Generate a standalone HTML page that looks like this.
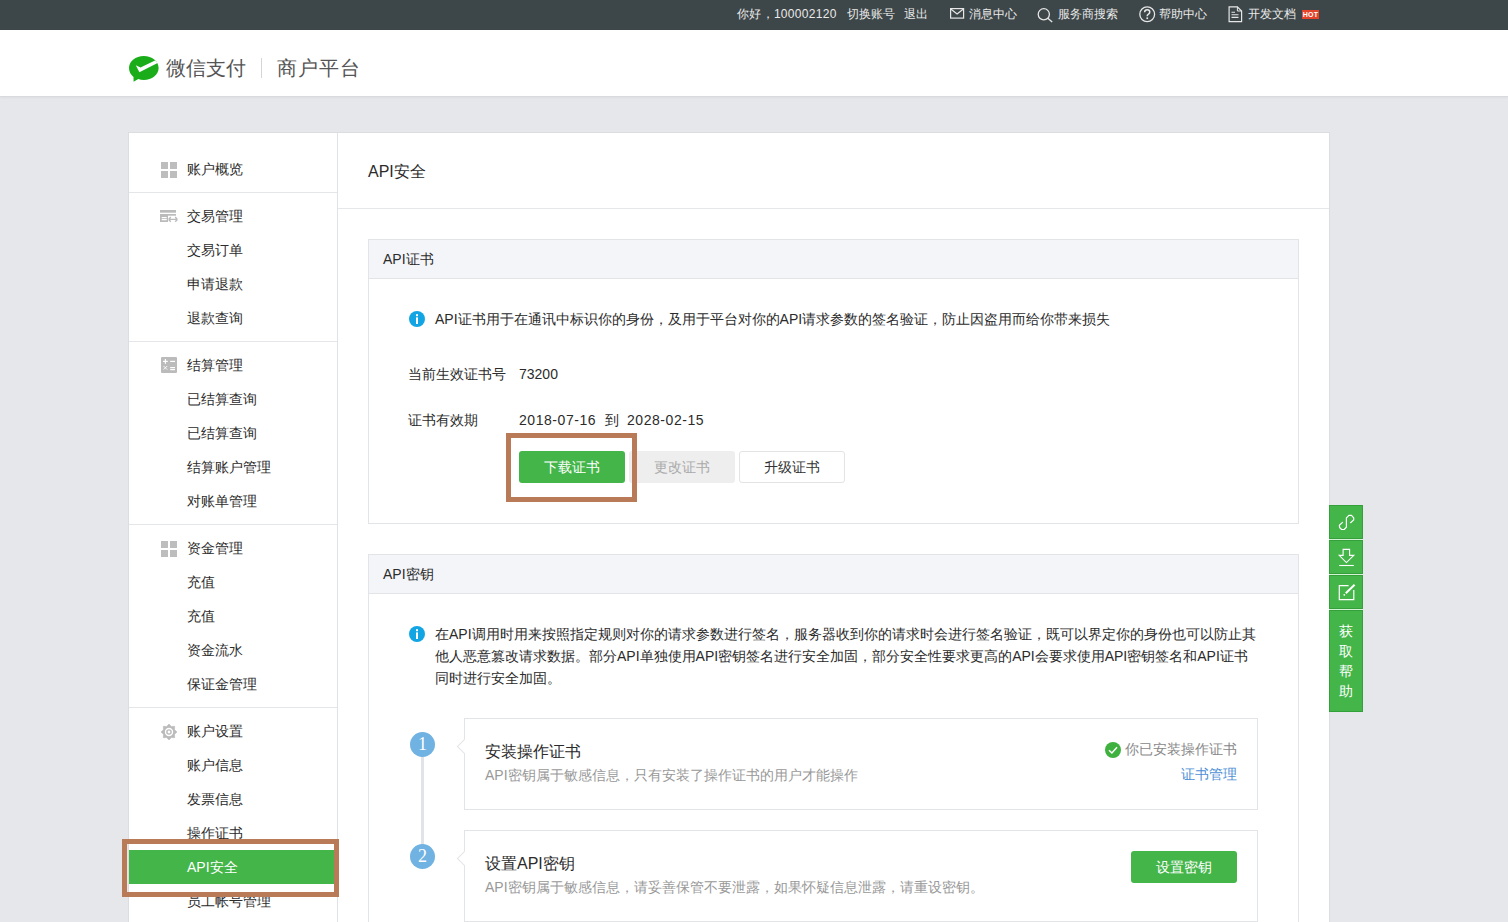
<!DOCTYPE html>
<html><head><meta charset="utf-8">
<style>
*{margin:0;padding:0;box-sizing:border-box;}
html,body{width:1508px;height:922px;overflow:hidden;}
body{background:#e6e7eb;font-family:"Liberation Sans",sans-serif;font-size:14px;color:#2b2b2b;position:relative;}
.abs{position:absolute;}
svg{position:absolute;overflow:visible;}
#topbar{left:0;top:0;width:1508px;height:30px;background:#3d4648;color:#eaeaea;font-size:12px;}
#topbar span{position:absolute;top:6px;line-height:16px;white-space:nowrap;}
#header{left:0;top:30px;width:1508px;height:67px;background:#fff;border-bottom:1px solid #d9dadd;box-shadow:0 1px 2px rgba(0,0,0,0.04);}
#main{left:128px;top:132px;width:1202px;height:800px;background:#fff;border:1px solid #dcdde1;}
#side{left:129px;top:133px;width:209px;height:800px;border-right:1px solid #e1e2e6;}
.nav{position:absolute;left:187px;white-space:nowrap;line-height:18px;}
.hr{position:absolute;left:129px;width:208px;height:1px;background:#e5e6e9;}
.panel{position:absolute;left:368px;width:931px;border:1px solid #e3e4e8;background:#fff;}
.ph{height:39px;background:#f4f5f9;border-bottom:1px solid #e3e4e8;padding-left:14px;line-height:38px;}
.txt{position:absolute;white-space:nowrap;line-height:18px;}
.btn{position:absolute;height:32px;line-height:32px;text-align:center;border-radius:3px;font-size:14px;}
.brown{position:absolute;border:5px solid #b97a57;}
.tb{position:absolute;left:1329px;width:34px;background:#44b549;border:1px solid #33a03a;}
.step{position:absolute;left:464px;width:794px;height:92px;border:1px solid #e3e4e8;background:#fff;}
.arr{position:absolute;left:-6.5px;top:22px;width:11px;height:11px;background:#fff;border-left:1px solid #e3e4e8;border-bottom:1px solid #e3e4e8;transform:rotate(45deg);}
.circ{position:absolute;left:410px;width:25px;height:25px;border-radius:50%;background:#70b2e2;color:#fff;text-align:center;line-height:25px;font-size:18px;font-family:"Liberation Serif",serif;}
</style></head><body>
<div id="topbar" class="abs">
  <span style="left:737px;letter-spacing:0.3px">你好，100002120</span>
  <span style="left:847px">切换账号</span>
  <span style="left:904px">退出</span>
  <svg style="left:950px;top:8px" width="15" height="11" viewBox="0 0 15 11"><rect x="0.6" y="0.6" width="13" height="9.5" fill="none" stroke="#e6e6e6" stroke-width="1.2"/><path d="M0.8 1 L7.1 6 L13.4 1" fill="none" stroke="#e6e6e6" stroke-width="1.2"/></svg>
  <span style="left:969px">消息中心</span>
  <svg style="left:1037px;top:8px" width="17" height="15" viewBox="0 0 17 15"><circle cx="6.8" cy="6.3" r="5.6" fill="none" stroke="#e6e6e6" stroke-width="1.3"/><path d="M10.8 10.3 L15.2 14" stroke="#e6e6e6" stroke-width="1.4"/></svg>
  <span style="left:1058px">服务商搜索</span>
  <svg style="left:1139px;top:6px" width="17" height="17" viewBox="0 0 17 17"><circle cx="8.2" cy="8.2" r="7.4" fill="none" stroke="#e6e6e6" stroke-width="1.3"/><path d="M5.6 6.3 Q5.7 3.8 8.2 3.8 Q10.8 3.8 10.8 6.1 Q10.8 7.5 9.2 8.3 Q8.2 8.9 8.2 10.2" fill="none" stroke="#e6e6e6" stroke-width="1.5"/><rect x="7.4" y="11.4" width="1.7" height="1.7" fill="#e6e6e6"/></svg>
  <span style="left:1159px">帮助中心</span>
  <svg style="left:1228px;top:6px" width="15" height="17" viewBox="0 0 15 17"><path d="M1.1 0.8 H9.4 L13.6 5 V15.6 H1.1 Z" fill="none" stroke="#e6e6e6" stroke-width="1.2"/><path d="M9.4 0.8 V5 H13.6" fill="none" stroke="#e6e6e6" stroke-width="1"/><path d="M3.5 6.2 H7 M3.5 8.8 H10.5 M3.5 11.4 H10.5" stroke="#e6e6e6" stroke-width="1.1"/></svg>
  <span style="left:1248px">开发文档</span>
  <div class="abs" style="left:1302px;top:10px;width:17px;height:9px;background:#e5432a;color:#fff;font-size:7px;line-height:9px;text-align:center;font-weight:bold;letter-spacing:0.2px">HOT</div>
</div>
<div id="header" class="abs">
  <svg style="left:128px;top:25px" width="32" height="28" viewBox="0 0 32 28"><path d="M15.8 1 C7.7 1 1 6.3 1 13.1 C1 16.6 2.7 19.7 5.5 21.9 L5.6 26.7 L10.3 23.9 C12 24.6 13.8 24.9 15.8 24.9 C24 24.9 30.6 19.6 30.6 12.9 C30.6 6.3 24 1 15.8 1 Z" fill="#1aad19"/><path d="M7.8 10.2 L12.5 12.6 L27 5.4 L29.6 7.9 L11.4 17.2 Z" fill="#fff"/></svg>
  <div class="txt" style="left:166px;top:26px;font-size:20px;line-height:24px;color:#555">微信支付</div>
  <div class="abs" style="left:261px;top:28px;width:1px;height:20px;background:#d5d5d5"></div>
  <div class="txt" style="left:277px;top:26px;font-size:20px;line-height:24px;color:#555;letter-spacing:1px">商户平台</div>
</div>
<div id="main" class="abs"></div>
<div id="side" class="abs"></div>
<div class="hr" style="top:192px"></div>
<div class="hr" style="top:341px"></div>
<div class="hr" style="top:524px"></div>
<div class="hr" style="top:707px"></div>

<!-- sidebar icons -->
<svg style="left:161px;top:162px" width="16" height="16"><rect x="0" y="0" width="7" height="7" fill="#bdbdbd"/><rect x="9" y="0" width="7" height="7" fill="#bdbdbd"/><rect x="0" y="9" width="7" height="7" fill="#bdbdbd"/><rect x="9" y="9" width="7" height="7" fill="#bdbdbd"/></svg>
<svg style="left:160px;top:209px" width="19" height="14" viewBox="0 0 19 14"><rect x="0" y="1" width="16" height="2.7" fill="#bbb"/><rect x="0" y="5" width="16" height="1.7" fill="#bbb"/><path d="M0 5 H8 V13 H0 Z M1.7 8 V9.2 H6.7 V8 Z M1.7 10 V11.3 H6.7 V10 Z" fill="#bbb" fill-rule="evenodd"/><path d="M8.6 10.4 H17.4 M8.6 10.4 L10.8 8.1 M8.6 10.4 L10.8 12.7 M17.4 10.4 L15.2 8.1 M17.4 10.4 L15.2 12.7" fill="none" stroke="#bbb" stroke-width="1.4"/></svg>
<svg style="left:161px;top:357px" width="16" height="16" viewBox="0 0 16 16"><rect x="0" y="0" width="16" height="16" rx="1" fill="#bbb"/><rect x="2" y="3.8" width="4.8" height="1.2" fill="#fff"/><rect x="3.8" y="2" width="1.2" height="4.8" fill="#fff"/><rect x="9.2" y="3.8" width="4.8" height="1.2" fill="#fff"/><path d="M2.6 9 L6.2 12.6 M6.2 9 L2.6 12.6" stroke="#fff" stroke-width="0.9"/><rect x="9.2" y="10" width="4.8" height="1.2" fill="#fff"/><rect x="9.2" y="12" width="4.8" height="1.2" fill="#fff"/></svg>
<svg style="left:161px;top:541px" width="16" height="16"><rect x="0" y="0" width="7" height="7" fill="#bdbdbd"/><rect x="9" y="0" width="7" height="7" fill="#bdbdbd"/><rect x="0" y="9" width="7" height="7" fill="#bdbdbd"/><rect x="9" y="9" width="7" height="7" fill="#bdbdbd"/></svg>
<svg style="left:161px;top:724px" width="16" height="16" viewBox="0 0 16 16"><path d="M8.00 0.00 L10.30 2.46 L13.66 2.34 L13.54 5.70 L16.00 8.00 L13.54 10.30 L13.66 13.66 L10.30 13.54 L8.00 16.00 L5.70 13.54 L2.34 13.66 L2.46 10.30 L0.00 8.00 L2.46 5.70 L2.34 2.34 L5.70 2.46 Z" fill="#bbb" stroke="#bbb" stroke-width="0.6" stroke-linejoin="round"/><circle cx="8" cy="8" r="4.2" fill="#fff"/><circle cx="8" cy="8" r="2.8" fill="#bbb"/><circle cx="8" cy="8" r="1.4" fill="#fff"/></svg>

<div class="nav" style="top:160px">账户概览</div>
<div class="nav" style="top:207px">交易管理</div>
<div class="nav" style="top:241px">交易订单</div>
<div class="nav" style="top:275px">申请退款</div>
<div class="nav" style="top:309px">退款查询</div>
<div class="nav" style="top:356px">结算管理</div>
<div class="nav" style="top:390px">已结算查询</div>
<div class="nav" style="top:424px">已结算查询</div>
<div class="nav" style="top:458px">结算账户管理</div>
<div class="nav" style="top:492px">对账单管理</div>
<div class="nav" style="top:539px">资金管理</div>
<div class="nav" style="top:573px">充值</div>
<div class="nav" style="top:607px">充值</div>
<div class="nav" style="top:641px">资金流水</div>
<div class="nav" style="top:675px">保证金管理</div>
<div class="nav" style="top:722px">账户设置</div>
<div class="nav" style="top:756px">账户信息</div>
<div class="nav" style="top:790px">发票信息</div>
<div class="nav" style="top:824px">操作证书</div>
<div class="abs" style="left:129px;top:850px;width:208px;height:34px;background:#44b549"></div>
<div class="nav" style="top:858px;color:#fff">API安全</div>
<div class="nav" style="top:892px">员工帐号管理</div>
<div class="brown" style="left:122px;top:839px;width:217px;height:58px"></div>

<!-- content -->
<div class="txt" style="left:368px;top:162px;font-size:16px;line-height:20px">API安全</div>
<div class="abs" style="left:338px;top:208px;width:991px;height:1px;background:#e6e7ea"></div>

<div class="panel" style="top:239px;height:285px"><div class="ph">API证书</div></div>
<svg style="left:409px;top:311px" width="16" height="16" viewBox="0 0 16 16"><circle cx="8" cy="8" r="8" fill="#13a5e3"/><rect x="7" y="3.2" width="2" height="2" fill="#fff"/><rect x="7" y="6.4" width="2" height="6.6" fill="#fff"/></svg>
<div class="txt" style="left:435px;top:310px">API证书用于在通讯中标识你的身份，及用于平台对你的API请求参数的签名验证，防止因盗用而给你带来损失</div>
<div class="txt" style="left:408px;top:365px">当前生效证书号</div>
<div class="txt" style="left:519px;top:365px">73200</div>
<div class="txt" style="left:408px;top:411px">证书有效期</div>
<div class="txt" style="left:519px;top:411px;letter-spacing:0.55px">2018-07-16</div><div class="txt" style="left:605px;top:411px">到</div><div class="txt" style="left:627px;top:411px;letter-spacing:0.55px">2028-02-15</div>
<div class="btn" style="left:519px;top:451px;width:106px;background:#44b549;color:#fff">下载证书</div>
<div class="btn" style="left:629px;top:451px;width:106px;background:#eeeeee;color:#aaa">更改证书</div>
<div class="btn" style="left:739px;top:451px;width:106px;background:#fff;border:1px solid #e3e3e3;color:#333;line-height:30px">升级证书</div>
<div class="brown" style="left:506px;top:433px;width:131px;height:69px"></div>

<div class="panel" style="top:554px;height:400px"><div class="ph">API密钥</div></div>
<svg style="left:409px;top:626px" width="16" height="16" viewBox="0 0 16 16"><circle cx="8" cy="8" r="8" fill="#13a5e3"/><rect x="7" y="3.2" width="2" height="2" fill="#fff"/><rect x="7" y="6.4" width="2" height="6.6" fill="#fff"/></svg>
<div class="txt" style="left:435px;top:623px;line-height:22px">在API调用时用来按照指定规则对你的请求参数进行签名，服务器收到你的请求时会进行签名验证，既可以界定你的身份也可以防止其<br>他人恶意篡改请求数据。部分API单独使用API密钥签名进行安全加固，部分安全性要求更高的API会要求使用API密钥签名和API证书<br>同时进行安全加固。</div>

<div class="step" style="top:718px"><div class="arr"></div></div>
<div class="step" style="top:830px"><div class="arr"></div></div>
<div class="abs" style="left:421px;top:756px;width:3px;height:90px;background:#e2e3e7"></div>
<div class="circ" style="top:732px">1</div>
<div class="circ" style="top:844px">2</div>
<div class="txt" style="left:485px;top:742px;font-size:16px;line-height:20px">安装操作证书</div>
<div class="txt" style="left:485px;top:766px;color:#999">API密钥属于敏感信息，只有安装了操作证书的用户才能操作</div>
<svg style="left:1105px;top:742px" width="16" height="16" viewBox="0 0 16 16"><circle cx="8" cy="8" r="8" fill="#3fb13f"/><path d="M4 8.2 L6.9 11 L12 5.3" fill="none" stroke="#fff" stroke-width="1.5"/></svg>
<div class="txt" style="left:1125px;top:740px;color:#888">你已安装操作证书</div>
<div class="txt" style="left:1181px;top:765px;color:#4d8fd6">证书管理</div>
<div class="txt" style="left:485px;top:854px;font-size:16px;line-height:20px">设置API密钥</div>
<div class="txt" style="left:485px;top:878px;color:#999">API密钥属于敏感信息，请妥善保管不要泄露，如果怀疑信息泄露，请重设密钥。</div>
<div class="btn" style="left:1131px;top:851px;width:106px;background:#44b549;color:#fff">设置密钥</div>

<!-- side toolbar -->
<div class="abs" style="left:1329px;top:505px;width:34px;height:207px;background:#d6f2d6"></div>
<div class="tb" style="top:505px;height:34px"></div>
<div class="tb" style="top:540px;height:34px"></div>
<div class="tb" style="top:575px;height:34px"></div>
<div class="tb" style="top:610px;height:102px;color:#fff;text-align:center;padding-top:10px;line-height:20px;font-size:14px">获<br>取<br>帮<br>助</div>
<svg style="left:1338px;top:514px" width="17" height="17" viewBox="0 0 17 17"><path d="M4.5 8.4 L1.4 11.2 L1.6 13.5 L3.6 15.5 L6.2 15.5 L8.4 13.2 L8.4 3.9 L10.9 1.4 L13.5 1.4 L15.7 3.9 L15.7 5.9 L12.6 8.7" fill="none" stroke="#fff" stroke-width="1.2" stroke-linejoin="round" stroke-linecap="round"/></svg>
<svg style="left:1338px;top:548px" width="17" height="19" viewBox="0 0 17 19"><path d="M5.1 1.4 H11.6 V7.4 H15.8 L8.4 14.6 L1.2 7.4 H5.1 Z" fill="none" stroke="#fff" stroke-width="1.1"/><path d="M1.2 17.5 H15.8" stroke="#fff" stroke-width="1.1"/></svg>
<svg style="left:1338px;top:583px" width="18" height="18" viewBox="0 0 18 18"><path d="M10.6 2.6 H1.3 V16.6 H15.8 V6.9" fill="none" stroke="#fff" stroke-width="1.2"/><path d="M16.6 1.7 L7.8 10.2" stroke="#fff" stroke-width="2"/><circle cx="6.3" cy="11.8" r="0.9" fill="#fff"/></svg>
</body></html>
